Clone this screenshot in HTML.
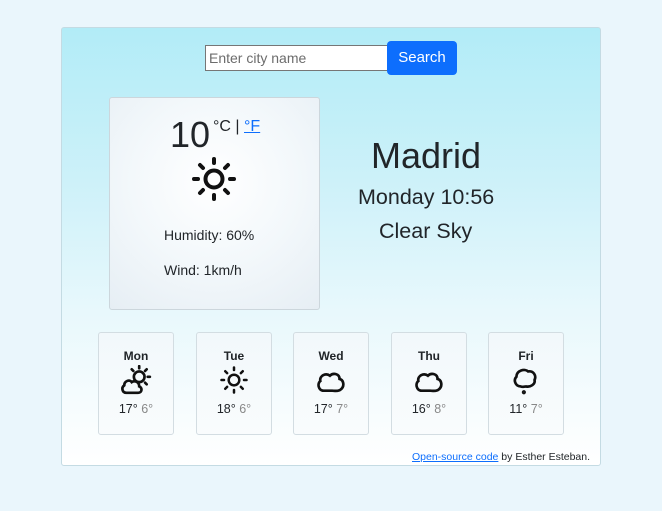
<!DOCTYPE html>
<html><head><meta charset="utf-8"><style>
*{box-sizing:border-box;margin:0;padding:0}
body{width:662px;height:511px;background:#eaf6fc;font-family:"Liberation Sans",Arial,sans-serif;color:#212529;position:relative;overflow:hidden}
.c{position:absolute;left:61px;top:27px;width:540px;height:439px;border:1px solid #c4dbe3;border-radius:3px;background:linear-gradient(180deg,#b2ecf7 0%,#cdf1f9 35%,#e8f8fc 65%,#ffffff 100%)}
.in{position:absolute;left:205px;top:45px;width:183px;height:26px;border:1px solid #767676;background:#fff;font-size:14px;color:#6c6c6c;padding:4px 0 0 3px}
.btn{position:absolute;left:387px;top:41px;width:70px;height:34px;background:#0d6efd;border-radius:4px;color:#fff;font-size:15px;text-align:center;line-height:34px}
.main{position:absolute;left:109px;top:97px;width:211px;height:213px;border:1px solid #ccd6dc;border-radius:3px;background:radial-gradient(circle at 50% 40%,#ffffff 0%,#f3f8fb 50%,#e6eef4 100%)}
.abs{position:absolute;white-space:nowrap}
.card{position:absolute;top:332px;width:76px;height:103px;border:1px solid #d3dde2;border-radius:3px;background:linear-gradient(180deg,#f2f8fb,#f9fcfd);text-align:center}
.card .d{font-size:12px;font-weight:bold;margin-top:16px}
.card svg{display:block;margin:2px auto 0}
.card .t{font-size:12.5px;position:absolute;top:69px;width:100%}
.card .t span{color:#888}
</style></head><body>
<div class="c"></div>
<div class="in">Enter city name</div>
<div class="btn">Search</div>
<div class="main"></div>
<div class="abs" style="left:170px;top:114px;font-size:36px">10</div>
<div class="abs" style="left:213px;top:118px;font-size:16px">°C | <span style="color:#0d6efd;text-decoration:underline">°F</span></div>
<svg class="abs" style="left:190px;top:155px" width="48" height="48" viewBox="0 0 48 48" fill="none" stroke="#111" stroke-width="4" stroke-linecap="round">
<circle cx="24" cy="24" r="8.5"/>
<path d="M24 4v4M24 40v4M4 24h4M40 24h4M10 10l3 3M35 35l3 3M10 38l3-3M35 13l3-3"/></svg>
<div class="abs" style="left:164px;top:227px;font-size:14px">Humidity: 60%</div>
<div class="abs" style="left:164px;top:262px;font-size:14px">Wind: 1km/h</div>
<div class="abs" style="left:371px;top:135px;font-size:36px">Madrid</div>
<div class="abs" style="left:358px;top:185px;font-size:21.5px">Monday 10:56</div>
<div class="abs" style="left:379px;top:219px;font-size:21.5px">Clear Sky</div>

<div class="card" style="left:98px"><div class="d">Mon</div>
<svg width="32" height="30" viewBox="0 0 30 28" fill="none" stroke="#111" stroke-width="2.5" stroke-linecap="round"><circle cx="18" cy="11" r="5"/><path d="M18 1v2M25 4l-1.5 1.5M28 11h-2M25 18l-1.5-1.5M11 4l1.5 1.5"/><path d="M6 26c-4 0-5-5-2-7 0-4 5-6 7-3 3-2 7 0 7 4 3 1 3 6-1 6z" fill="#f4f9fb"/></svg>
<div class="t">17° <span>6°</span></div></div>
<div class="card" style="left:196px"><div class="d">Tue</div>
<svg width="32" height="30" viewBox="0 0 48 48" fill="none" stroke="#111" stroke-width="4" stroke-linecap="round"><circle cx="24" cy="24" r="8.5"/><path d="M24 4v4M24 40v4M4 24h4M40 24h4M10 10l3 3M35 35l3 3M10 38l3-3M35 13l3-3"/></svg>
<div class="t">18° <span>6°</span></div></div>
<div class="card" style="left:293px"><div class="d">Wed</div>
<svg width="32" height="30" viewBox="0 0 30 28" fill="none" stroke="#111" stroke-width="2.5"><path d="M8 24c-5 0-6-7-3-9-1-5 5-8 9-5 3-3 9-2 9 3 4 1 5 7 1 10-2 2-6 1-8 1z"/></svg>
<div class="t">17° <span>7°</span></div></div>
<div class="card" style="left:391px"><div class="d">Thu</div>
<svg width="32" height="30" viewBox="0 0 30 28" fill="none" stroke="#111" stroke-width="2.5"><path d="M8 24c-5 0-6-7-3-9-1-5 5-8 9-5 3-3 9-2 9 3 4 1 5 7 1 10-2 2-6 1-8 1z"/></svg>
<div class="t">16° <span>8°</span></div></div>
<div class="card" style="left:488px"><div class="d">Fri</div>
<svg width="32" height="30" viewBox="0 0 30 28" fill="none" stroke="#111" stroke-width="2.5"><path d="M10 20c-5 0-7-6-4-9 0-6 8-8 11-5 5-1 8 4 6 8 1 4-4 7-8 6-2 0-3 1-5 0z"/><circle cx="13" cy="25.5" r="0.7" fill="#111"/></svg>
<div class="t">11° <span>7°</span></div></div>

<div class="abs" style="left:412px;top:451px;font-size:10.5px"><span style="color:#0d6efd;text-decoration:underline">Open-source code</span> by Esther Esteban.</div>
</body></html>
